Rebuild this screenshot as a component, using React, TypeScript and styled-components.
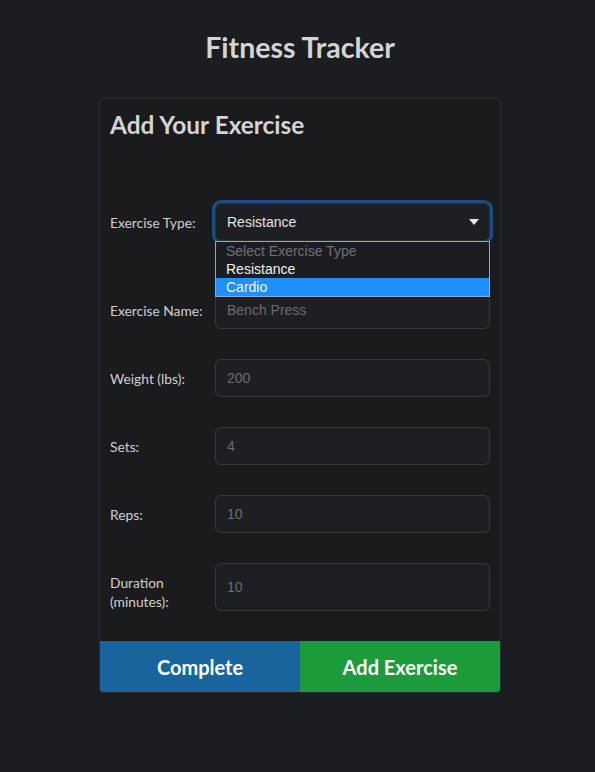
import React from "react";
import styled, { createGlobalStyle } from "styled-components";

const GlobalStyle = createGlobalStyle`
  html, body { margin: 0; padding: 0; background: #1c1d20; }
  body { font-family: Lato, "Noto Sans", sans-serif; color: #d6d6d6; }
  * { box-sizing: border-box; }
`;

const Page = styled.div`
  min-height: 772px;
  padding: 30px 0 0 5px;
  display: flex;
  flex-direction: column;
  align-items: center;
`;

const Title = styled.h1`
  margin: 0;
  font-family: Lato, sans-serif;
  font-weight: 700;
  font-size: 28.5px;
  line-height: 34px;
  color: #d4d4d4;
`;

const Card = styled.div`
  margin-top: 34px;
  width: 402px;
  background: #1a1b1d;
  border: 1px solid #2a2b2e;
  border-radius: 4px;
  overflow: hidden;
  display: flex;
  flex-direction: column;
`;

const CardTitle = styled.h2`
  margin: 0;
  padding: 11px 10px 0 10px;
  font-family: Lato, sans-serif;
  font-weight: 700;
  font-size: 24.4px;
  line-height: 29px;
  color: #d4d4d4;
`;

const Form = styled.div`
  display: flex;
  flex-direction: column;
  padding: 64px 10px 30px 10px;
`;

const Row = styled.div<{ $gap: number; $top?: boolean }>`
  display: flex;
  align-items: ${(p) => (p.$top ? "flex-start" : "center")};
  margin-bottom: ${(p) => p.$gap}px;
  position: relative;
`;

const Label = styled.label<{ $padTop?: number }>`
  width: 105px;
  flex: none;
  padding-top: ${(p) => p.$padTop ?? 0}px;
  font-family: Lato, sans-serif;
  font-size: 13.8px;
  line-height: 19px;
  color: #d0d0d0;
`;

const Input = styled.div<{ $h?: number }>`
  flex: 1;
  height: ${(p) => p.$h ?? 38}px;
  border: 1px solid #37383c;
  border-radius: 6px;
  background: #1e1f22;
  display: flex;
  align-items: center;
  padding: 0 11px;
  font-family: "Liberation Sans", Arial, sans-serif;
  font-size: 14px;
  color: #6b6c6f;
`;

const SelectBox = styled.div`
  flex: 1;
  height: 38px;
  border: 1px solid #2e3034;
  border-radius: 6px;
  background: #1e1f22;
  box-shadow: 0 0 0 3px #1b4d84;
  display: flex;
  align-items: center;
  justify-content: space-between;
  padding: 0 10px 0 11px;
  font-family: "Liberation Sans", Arial, sans-serif;
  font-size: 14px;
  color: #e4e4e4;
`;

const Caret = styled.svg`
  width: 10px;
  height: 6px;
  margin-top: -1px;
`;

const Dropdown = styled.ul`
  position: absolute;
  left: 105px;
  top: 38px;
  width: 275px;
  margin: 0;
  padding: 0;
  list-style: none;
  background: #1c1d20;
  border: 1px solid #8fa6cf;
  z-index: 5;
`;

const Option = styled.li<{ $active?: boolean; $muted?: boolean }>`
  height: 18px;
  line-height: 18px;
  padding: 0 10px;
  font-family: "Liberation Sans", Arial, sans-serif;
  font-size: 14px;
  color: ${(p) => (p.$muted ? "#6f7074" : "#f2f2f2")};
  background: ${(p) => (p.$active ? "#1e90ff" : "transparent")};
`;

const Buttons = styled.div`
  display: flex;
`;

const Button = styled.button<{ $bg: string }>`
  flex: 1;
  height: 51px;
  border: none;
  background: ${(p) => p.$bg};
  color: #ffffff;
  font-family: Lato, sans-serif;
  font-weight: 700;
  font-size: 20px;
  cursor: pointer;
  padding: 0;
`;

export default function App() {
  return (
    <>
      <GlobalStyle />
      <Page>
        <Title>Fitness Tracker</Title>
        <Card>
          <CardTitle>Add Your Exercise</CardTitle>
          <Form>
            <Row $gap={50}>
              <Label>Exercise Type:</Label>
              <SelectBox>
                <span>Resistance</span>
                <Caret viewBox="0 0 10 6">
                  <path d="M0 0 L10 0 L5 6 Z" fill="#e8e8e8" />
                </Caret>
              </SelectBox>
              <Dropdown>
                <Option $muted>Select Exercise Type</Option>
                <Option>Resistance</Option>
                <Option $active>Cardio</Option>
              </Dropdown>
            </Row>
            <Row $gap={30}>
              <Label>Exercise Name:</Label>
              <Input>Bench Press</Input>
            </Row>
            <Row $gap={30}>
              <Label>Weight (lbs):</Label>
              <Input>200</Input>
            </Row>
            <Row $gap={30}>
              <Label>Sets:</Label>
              <Input>4</Input>
            </Row>
            <Row $gap={30}>
              <Label>Reps:</Label>
              <Input>10</Input>
            </Row>
            <Row $gap={0} $top>
              <Label $padTop={10}>
                Duration
                <br />
                (minutes):
              </Label>
              <Input $h={48}>10</Input>
            </Row>
          </Form>
          <Buttons>
            <Button $bg="#1a649e">Complete</Button>
            <Button $bg="#1c9b3b">Add Exercise</Button>
          </Buttons>
        </Card>
      </Page>
    </>
  );
}
